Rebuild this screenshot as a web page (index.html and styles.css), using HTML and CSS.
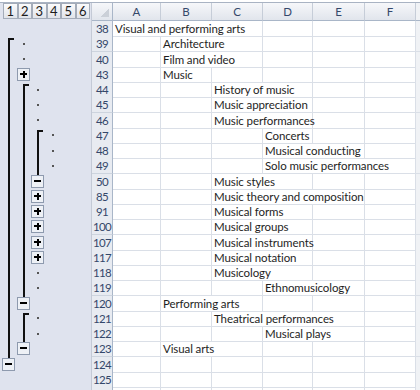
FILE: index.html
```html
<!DOCTYPE html>
<html lang="en">
<head>
  <meta charset="UTF-8" />
  <title>Outline</title>
  <link rel="stylesheet" href="styles.css">
</head>
<body>

<div class="window">

  <!-- outline bars and buttons -->
  <div class="outline">
    <div class="levels">
      <span class="lvl">1</span><span class="lvl">2</span><span class="lvl">3</span><span class="lvl">4</span><span class="lvl">5</span><span class="lvl">6</span>
    </div>
    <div class="orow"></div>
    <div class="orow"><span class="slot cap"></span><span class="slot"><i class="dot"></i></span></div>
    <div class="orow"><span class="slot bar"></span><span class="slot"><i class="dot"></i></span></div>
    <div class="orow"><span class="slot bar"></span><span class="slot"><i class="btn plus"></i></span></div>
    <div class="orow"><span class="slot bar"></span><span class="slot cap"></span><span class="slot"><i class="dot"></i></span></div>
    <div class="orow"><span class="slot bar"></span><span class="slot bar"></span><span class="slot"><i class="dot"></i></span></div>
    <div class="orow"><span class="slot bar"></span><span class="slot bar"></span><span class="slot"><i class="dot"></i></span></div>
    <div class="orow"><span class="slot bar"></span><span class="slot bar"></span><span class="slot cap"></span><span class="slot"><i class="dot"></i></span></div>
    <div class="orow"><span class="slot bar"></span><span class="slot bar"></span><span class="slot bar"></span><span class="slot"><i class="dot"></i></span></div>
    <div class="orow"><span class="slot bar"></span><span class="slot bar"></span><span class="slot bar"></span><span class="slot"><i class="dot"></i></span></div>
    <div class="orow"><span class="slot bar"></span><span class="slot bar"></span><span class="slot end"><i class="btn minus"></i></span></div>
    <div class="orow"><span class="slot bar"></span><span class="slot bar"></span><span class="slot"><i class="btn plus"></i></span></div>
    <div class="orow"><span class="slot bar"></span><span class="slot bar"></span><span class="slot"><i class="btn plus"></i></span></div>
    <div class="orow"><span class="slot bar"></span><span class="slot bar"></span><span class="slot"><i class="btn plus"></i></span></div>
    <div class="orow"><span class="slot bar"></span><span class="slot bar"></span><span class="slot"><i class="btn plus"></i></span></div>
    <div class="orow"><span class="slot bar"></span><span class="slot bar"></span><span class="slot"><i class="btn plus"></i></span></div>
    <div class="orow"><span class="slot bar"></span><span class="slot bar"></span><span class="slot"><i class="dot"></i></span></div>
    <div class="orow"><span class="slot bar"></span><span class="slot bar"></span><span class="slot"><i class="dot"></i></span></div>
    <div class="orow"><span class="slot bar"></span><span class="slot end"><i class="btn minus"></i></span></div>
    <div class="orow"><span class="slot bar"></span><span class="slot cap"></span><span class="slot"><i class="dot"></i></span></div>
    <div class="orow"><span class="slot bar"></span><span class="slot bar"></span><span class="slot"><i class="dot"></i></span></div>
    <div class="orow"><span class="slot bar"></span><span class="slot end"><i class="btn minus"></i></span></div>
    <div class="orow"><span class="slot end"><i class="btn minus"></i></span></div>
    <div class="orow"></div>
  </div>

  <!-- the worksheet -->
  <div class="sheet">
    <div class="hrow">
      <div class="corner"></div>
      <div class="ch">A</div><div class="ch">B</div><div class="ch">C</div><div class="ch">D</div><div class="ch">E</div><div class="ch">F</div>
      <div class="ch edge"></div>
    </div>

    <div class="row"><div class="rh">38</div><div class="c s3">Visual and performing arts</div><div class="c"></div><div class="c"></div><div class="c"></div><div class="c edge"></div></div>
    <div class="row"><div class="rh">39</div><div class="c"></div><div class="c s2">Architecture</div><div class="c"></div><div class="c"></div><div class="c"></div><div class="c edge"></div></div>
    <div class="row"><div class="rh">40</div><div class="c"></div><div class="c s2">Film and video</div><div class="c"></div><div class="c"></div><div class="c"></div><div class="c edge"></div></div>
    <div class="row"><div class="rh">43</div><div class="c"></div><div class="c">Music</div><div class="c"></div><div class="c"></div><div class="c"></div><div class="c"></div><div class="c edge"></div></div>
    <div class="row"><div class="rh">44</div><div class="c"></div><div class="c"></div><div class="c s2">History of music</div><div class="c"></div><div class="c"></div><div class="c edge"></div></div>
    <div class="row"><div class="rh">45</div><div class="c"></div><div class="c"></div><div class="c s2">Music appreciation</div><div class="c"></div><div class="c"></div><div class="c edge"></div></div>
    <div class="row"><div class="rh">46</div><div class="c"></div><div class="c"></div><div class="c s2">Music performances</div><div class="c"></div><div class="c"></div><div class="c edge"></div></div>
    <div class="row"><div class="rh">47</div><div class="c"></div><div class="c"></div><div class="c"></div><div class="c">Concerts</div><div class="c"></div><div class="c"></div><div class="c edge"></div></div>
    <div class="row"><div class="rh">48</div><div class="c"></div><div class="c"></div><div class="c"></div><div class="c s2">Musical conducting</div><div class="c"></div><div class="c edge"></div></div>
    <div class="row"><div class="rh">49</div><div class="c"></div><div class="c"></div><div class="c"></div><div class="c s3">Solo music performances</div><div class="c edge"></div></div>
    <div class="row"><div class="rh">50</div><div class="c"></div><div class="c"></div><div class="c s2">Music styles</div><div class="c"></div><div class="c"></div><div class="c edge"></div></div>
    <div class="row"><div class="rh">85</div><div class="c"></div><div class="c"></div><div class="c s3">Music theory and composition</div><div class="c"></div><div class="c edge"></div></div>
    <div class="row"><div class="rh">91</div><div class="c"></div><div class="c"></div><div class="c s2">Musical forms</div><div class="c"></div><div class="c"></div><div class="c edge"></div></div>
    <div class="row"><div class="rh">100</div><div class="c"></div><div class="c"></div><div class="c s2">Musical groups</div><div class="c"></div><div class="c"></div><div class="c edge"></div></div>
    <div class="row"><div class="rh">107</div><div class="c"></div><div class="c"></div><div class="c s2">Musical instruments</div><div class="c"></div><div class="c"></div><div class="c edge"></div></div>
    <div class="row"><div class="rh">117</div><div class="c"></div><div class="c"></div><div class="c s2">Musical notation</div><div class="c"></div><div class="c"></div><div class="c edge"></div></div>
    <div class="row"><div class="rh">118</div><div class="c"></div><div class="c"></div><div class="c s2">Musicology</div><div class="c"></div><div class="c"></div><div class="c edge"></div></div>
    <div class="row"><div class="rh">119</div><div class="c"></div><div class="c"></div><div class="c"></div><div class="c s2">Ethnomusicology</div><div class="c"></div><div class="c edge"></div></div>
    <div class="row"><div class="rh">120</div><div class="c"></div><div class="c s2">Performing arts</div><div class="c"></div><div class="c"></div><div class="c"></div><div class="c edge"></div></div>
    <div class="row"><div class="rh">121</div><div class="c"></div><div class="c"></div><div class="c s3">Theatrical performances</div><div class="c"></div><div class="c edge"></div></div>
    <div class="row"><div class="rh">122</div><div class="c"></div><div class="c"></div><div class="c"></div><div class="c s2">Musical plays</div><div class="c"></div><div class="c edge"></div></div>
    <div class="row"><div class="rh">123</div><div class="c"></div><div class="c s2">Visual arts</div><div class="c"></div><div class="c"></div><div class="c"></div><div class="c edge"></div></div>
    <div class="row"><div class="rh">124</div><div class="c"></div><div class="c"></div><div class="c"></div><div class="c"></div><div class="c"></div><div class="c"></div><div class="c edge"></div></div>
    <div class="row"><div class="rh">125</div><div class="c"></div><div class="c"></div><div class="c"></div><div class="c"></div><div class="c"></div><div class="c"></div><div class="c edge"></div></div>
    <div class="row"><div class="rh"></div><div class="c"></div><div class="c"></div><div class="c"></div><div class="c"></div><div class="c"></div><div class="c"></div><div class="c edge"></div></div>
  </div>

</div>

</body>
</html>
```

FILE: styles.css
```css
* {
  box-sizing: border-box;
}

body {
  margin: 0;
  background: #fff;
  font-family: Lato, "Liberation Sans", sans-serif;
  overflow: hidden;
}

.window {
  display: flex;
  margin-top: 2px;
  border-top: 1px solid #a9b3c3;
  height: 388px;
  overflow: hidden;
}

/* outline area */
.outline {
  width: 92px;
  flex: none;
  background: #dfe3ee;
  border-right: 1px solid #c4cad6;
}

.levels {
  display: flex;
  height: 18px;
  padding-left: 3px;
}

.lvl {
  width: 14.5px;
  height: 16px;
  border: 1px solid #a4acb9;
  background: linear-gradient(#fbfbfc, #e1e4ea);
  font-size: 13px;
  line-height: 14px;
  text-align: center;
  color: #1c1c1c;
}

.orow {
  display: flex;
  height: 15.26px;
  padding-left: 2px;
}

.slot {
  width: 15px;
  flex: none;
  display: flex;
  align-items: center;
  padding-left: 1px;
}

.slot:nth-child(even) {
  width: 14px;
}

.slot.bar {
  background: linear-gradient(#111, #111) 6px 0 / 2px 100% no-repeat;
}

.slot.cap {
  background:
    linear-gradient(#111, #111) 6px 2px / 2px 100% no-repeat,
    linear-gradient(#111, #111) 6px 2px / 6px 2px no-repeat;
}

.slot.end {
  background: linear-gradient(#111, #111) 6px 0 / 2px 50% no-repeat;
}

.dot {
  width: 2px;
  height: 2px;
  margin-left: 5px;
  background: #555;
}

.btn {
  width: 13px;
  height: 13px;
  margin-left: -1px;
  border: 1px solid #8e9aae;
}

.btn.plus {
  background:
    linear-gradient(#000, #000) 2px 4px / 7px 2px no-repeat,
    linear-gradient(#000, #000) 4.5px 2px / 2px 7px no-repeat,
    #eef1f6;
}

.btn.minus {
  background:
    linear-gradient(#000, #000) 2px 4px / 7px 2px no-repeat,
    #eef1f6;
}

/* worksheet */
.sheet {
  flex: 1;
}

.hrow,
.row {
  display: grid;
  grid-template-columns: 21px 48px 51px 51px 50px 52px 51px 1fr;
}

.hrow {
  height: 18px;
}

.row {
  height: 15.26px;
}

.corner,
.ch {
  background: linear-gradient(#f6f7fa, #e1e5ec);
  border-right: 1px solid #c6cdd8;
  border-bottom: 1px solid #a9b6c8;
}

.corner {
  background:
    linear-gradient(135deg, transparent 50%, #cbd0d8 50%) right 3px bottom 3px / 8px 8px no-repeat,
    linear-gradient(#f6f7fa, #e1e5ec);
  border-right-color: #a9b6c8;
}

.ch {
  font-size: 11.5px;
  line-height: 17px;
  text-align: center;
  color: #34476a;
}

.rh {
  background: #e8ebf1;
  border-right: 1px solid #a9b6c8;
  border-bottom: 1px solid #cdd4de;
  padding-top: 1px;
  font-size: 11.5px;
  line-height: 14px;
  letter-spacing: -0.6px;
  text-align: center;
  color: #34476a;
}

.c {
  border-right: 1px solid #dadfe7;
  border-bottom: 1px solid #dadfe7;
  padding: 1px 0 0 2px;
  font-size: 11.5px;
  line-height: 14px;
  letter-spacing: -0.1px;
  white-space: nowrap;
  color: #1e1e1e;
}

.s2 {
  grid-column: span 2;
}

.s3 {
  grid-column: span 3;
}

.edge {
  background: #f0f2f5;
  border-right: none;
}
```
